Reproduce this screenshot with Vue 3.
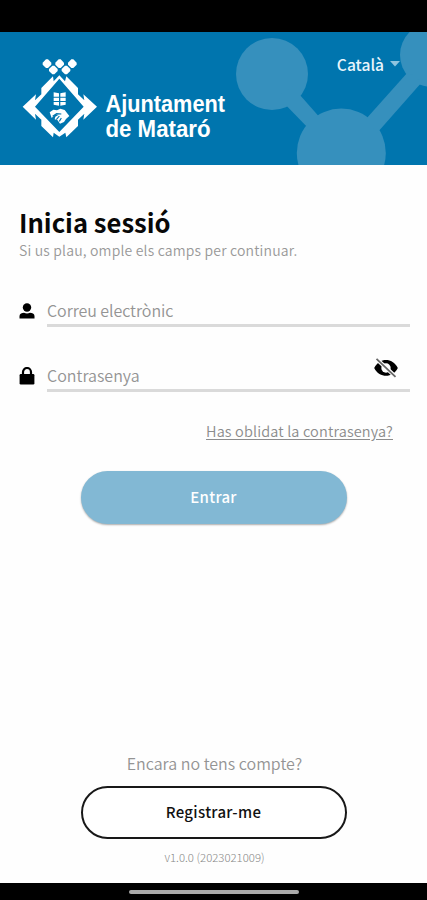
<script setup>
import { ref } from 'vue'
const email = ref('')
const password = ref('')
const dots = [[141, 131], [179, 131], [217, 131], [160, 150], [198, 150]]
</script>

<template>
  <div class="screen">
    <div class="status"></div>
    <header class="header">
      <svg class="banner" viewBox="0 0 427 133" width="427" height="133">
        <g class="network">
          <circle cx="272" cy="42" r="36" />
          <circle cx="341.3" cy="121" r="44.5" />
          <circle cx="432" cy="23" r="32" />
          <path d="M292 54L322 88L311 99L278 65Z" />
          <path d="M408 40L366 87L377 101L422 50Z" />
        </g>
        <g class="emblem" transform="translate(0 -12) scale(.33333)">
          <path v-for="(d, i) in dots" :key="i" :d="`M${d[0] - 3} ${d[1] - 13}h6l10 10v6l-10 10h-6l-10 -10v-6z`" />
          <path fill-rule="evenodd" d="M68 260L108 223L105 241L124 223V204L159 169L161 184L178 166L195 184L199 169L234 204V223L253 241L250 223L291 260L250 299L253 281L234 299V318L199 352L196 338L178 350L161 338L159 352L124 318V299L105 281L108 299ZM178 176L105 260L178 336L251 260Z" />
          <path d="M161 217l16 3v10h-16zM181 220l16 -3v13h-16zM161 233h16v10h-16zM181 233h16v10h-16zM161 246h16v11l-16 -3zM181 246h16v8l-16 3z" />
          <path d="M149 277L160 269L171 271L181 266L194 270L208 288L198 297L192 306L180 311L173 301L164 298L166 290L176 284L166 283L155 294Z" />
          <path class="crease" d="M158 289L170 281L184 282M169 299L178 288M178 304L184 294" />
        </g>
        <g class="brand">
          <text x="105.500" y="79.800" textLength="119.500" lengthAdjust="spacingAndGlyphs">Ajuntament</text>
          <text x="105.500" y="104.800" textLength="105" lengthAdjust="spacingAndGlyphs">de Mataró</text>
        </g>
      </svg>
      <button class="language">
        <span>Català</span>
        <svg viewBox="0 0 10 6" width="10" height="6"><path d="M0 0H10L5 5.500Z" /></svg>
      </button>
    </header>

    <main class="content">
      <h1>Inicia sessió</h1>
      <p class="lead">Si us plau, omple els camps per continuar.</p>

      <label class="field">
        <svg class="icon" viewBox="0 0 16 16" width="16" height="16">
          <circle cx="8" cy="4.500" r="4.200" />
          <path d="M.5 15.500V13C.5 11 3 9.800 5 9.800Q8 11.200 11 9.800C13 9.800 15.500 11 15.500 13V15.500Z" />
        </svg>
        <span class="box"><input v-model="email" type="text" class="email" placeholder="Correu electrònic" /></span>
      </label>

      <label class="field second">
        <svg class="icon lock" viewBox="0 0 16 18" width="16" height="18">
          <path d="M4 8V5a4 4 0 0 1 8 0v3" />
          <rect x=".6" y="7" width="14.800" height="10.500" rx="1.200" />
        </svg>
        <span class="box">
          <input v-model="password" type="password" class="password" placeholder="Contrasenya" />
          <svg class="eye" viewBox="0 0 26 20" width="26" height="20">
            <path class="lid" d="M1.200 10C4 4.500 8.500 2 13 2S22 4.500 24.800 10C22 15.500 17.500 17.800 13 17.800S4 15.500 1.200 10Z" />
            <circle class="iris" cx="13" cy="10" r="4.700" />
            <path class="gap" d="M2 -.5L24 20" />
            <path class="slash" d="M3.500 .8L22.500 18.800" />
          </svg>
        </span>
      </label>

      <a class="forgot">Has oblidat la contrasenya?</a>
      <button class="pill primary">Entrar</button>
      <div class="spacer"></div>
      <p class="question">Encara no tens compte?</p>
      <button class="pill outline">Registrar-me</button>
      <p class="version">v1.0.0 (2023021009)</p>
    </main>
    <div class="navbar"><span class="handle"></span></div>
  </div>
</template>

<style>
body { margin: 0; }
</style>
<style scoped>
.screen { width: 427px; height: 900px; display: flex; flex-direction: column; background: #fefefe; overflow: hidden; font-family: "Noto Sans CJK SC", "Noto Sans", sans-serif; }
.status { height: 32px; background: #000; flex: none; }
.header { height: 133px; background: #0075ae; position: relative; flex: none; }
.banner { display: block; }
.network { fill: #3690bd; }
.emblem { fill: #fff; }
.crease { fill: none; stroke: #0075ae; stroke-width: 3.5; }
.brand { fill: #fff; font: bold 24.5px "Liberation Sans", sans-serif; }
button { font-family: inherit; padding: 0; margin: 0; cursor: pointer; }
.language { position: absolute; right: 27px; top: 20px; height: 24px; border: 0; background: none; color: #e9f5fc; font-size: 15.6px; font-weight: 500; display: flex; align-items: center; gap: 6px; line-height: 24px; }
.language svg { fill: #8fc4df; }
.content { flex: 1; min-height: 0; display: flex; flex-direction: column; padding: 41px 17px 0 19px; }
h1 { margin: 0; font-size: 25.600px; line-height: 32px; font-weight: 700; color: #080808; }
p { margin: 0; }
.lead { font-size: 14px; letter-spacing: .18px; line-height: 20px; margin-top: 2px; margin-bottom: 1px; color: #999; font-weight: 350; }
.field { display: flex; align-items: flex-end; height: 66px; gap: 12px; }
.second { height: 65px; }
.icon { flex: none; margin-bottom: 8px; }
.lock { margin-bottom: 7px; }
.lock path { fill: none; stroke: #000; stroke-width: 2.2; }
.box { flex: 1; display: flex; align-items: flex-start; border-bottom: 3px solid #dadada; height: 30px; }
input { flex: 1; min-width: 0; border: 0; padding: 3px 0 0; height: 29px; box-sizing: border-box; outline: 0; background: none; font: 350 16px "Noto Sans CJK SC", sans-serif; letter-spacing: -.05px; }
.password { letter-spacing: 0; }
input::placeholder { color: #949494; opacity: 1; }
.eye { flex: none; margin: -1px 11px 0 0; }
.lid { fill: #000; }
.iris { fill: #fefefe; }
.gap { stroke: #fefefe; stroke-width: 4; }
.slash { stroke: #666; stroke-width: 1.8; }
.forgot { align-self: flex-end; margin: 28px 17px 0 0; font-size: 14.5px; letter-spacing: .14px; line-height: 22px; font-weight: 350; color: #8c8c8c; text-decoration: underline; text-underline-offset: 2px; }
.pill { align-self: center; width: 266px; height: 53px; flex: none; border-radius: 27px; font-size: 15px; font-weight: 500; letter-spacing: .3px; box-sizing: border-box; margin-right: 2px; padding-bottom: 2px; }
.primary { margin-top: 29px; color: #fff; background: #82b8d4; border: 0; box-shadow: 0 1px 2px #0005; }
.outline { color: #111; background: #fff; border: 2px solid #181818; }
.spacer { flex: 1; }
.question { text-align: center; font-size: 16px; line-height: 24px; color: #949494; font-weight: 350; margin-bottom: 11px; }
.version { text-align: center; font-size: 11.4px; line-height: 18px; color: #888; font-weight: 300; margin: 9px 0 17px; }
.outline + .version { margin-top: 9px; }
.question + .outline { margin-bottom: 0; }
.navbar { height: 17px; background: #000; flex: none; display: flex; justify-content: center; align-items: center; }
.handle { width: 170px; height: 4px; border-radius: 2px; background: #aaa; }
</style>
